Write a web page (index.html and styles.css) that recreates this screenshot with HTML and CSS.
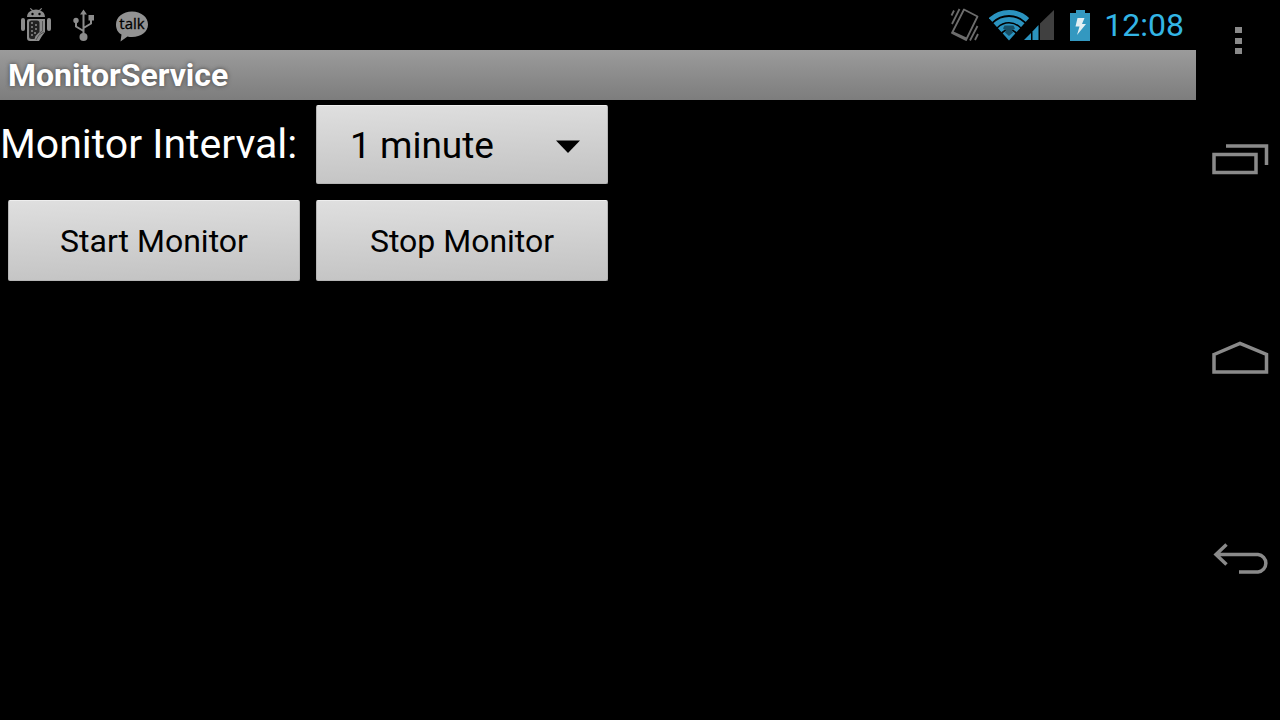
FILE: index.html
```html
<!DOCTYPE html>
<html lang="en">
<head>
<meta charset="utf-8">
<title>MonitorService</title>
<link rel="stylesheet" href="styles.css">
</head>
<body>
<div class="screen">
  <header class="status-bar">
    <div class="notifications">
      <svg class="icon" width="30" height="34" viewBox="0 0 30 34" aria-label="USB debugging">
        <g fill="#8c8c8c">
          <path d="M6 9C6 5.500 8 3.500 10.800 2.500L8.800 .7l.9-.7 2.200 2q3.100-.8 6.200 0L20.300 0l.9.7-2 1.800C22 3.500 24 5.500 24 9z"/>
          <rect x="0" y="10" width="4" height="13" rx="2"/>
          <rect x="26" y="10" width="4" height="13" rx="2"/>
          <path d="M6 13q0-2 2-2h16v13l-3 4-3 5H9q-3 0-3-3z"/>
        </g>
        <path d="M8 15q0-2.500 2.500-2.500H16q2.500 0 2.500 2.500V24l-4 4-1 3H10.500Q8 31 8 29z" fill="#222"/>
        <path d="M21.500 13v10l-3 2M23 24l-5 3-3 5" fill="none" stroke="#555" stroke-width="1"/>
        <g fill="#8c8c8c"><circle cx="11" cy="15" r="1"/><circle cx="15" cy="17" r="1"/><circle cx="11" cy="19" r="1"/><circle cx="15" cy="21" r="1"/><circle cx="11" cy="23" r="1"/><circle cx="14" cy="25" r="1"/><circle cx="11" cy="27" r="1"/></g>
        <circle cx="11.500" cy="6" r="1.200" fill="#000"/><circle cx="18.500" cy="6" r="1.200" fill="#000"/>
      </svg>
      <svg class="icon" width="22" height="34" viewBox="0 0 22 34" aria-label="USB connected">
        <path d="M10.500 29V6M10.500 23L3 18.500V13M10.500 20l7.500-4.500V11" fill="none" stroke="#8c8c8c" stroke-width="2"/>
        <path d="M10.500 1.500L14 6.500H7zM15.500 7H21v5.500h-5.500z" fill="#8c8c8c"/>
        <circle cx="3" cy="12.500" r="2.700" fill="#8c8c8c"/><circle cx="10.500" cy="29" r="4" fill="#8c8c8c"/>
      </svg>
      <svg class="icon" width="32" height="34" viewBox="0 0 32 34" aria-label="Talk message">
        <path d="M16 3.500C7 3.500 0 9 0 16.500 0 21 2 25 5.500 26.500l-1 7 7-5q2 .5 4.500.5c9 0 16-5 16-12.500S25 3.500 16 3.500z" fill="#929292"/>
        <text x="16" y="21" text-anchor="middle" class="talk-text">talk</text>
      </svg>
    </div>
    <div class="indicators">
      <svg class="vibrate" width="30" height="34" viewBox="0 0 30 34" aria-label="Vibrate">
        <g fill="none" stroke="#6c6c6c" stroke-width="1.800">
          <path d="M14 1.500L27.500 8.500 16 32 2 25z" stroke-linejoin="round"/>
          <path d="M1.500 7.500l2.500-5M2 16L9.500 1M20 32.500L27.500 18M25 32l3-6"/>
        </g>
        <path d="M2.500 23L16.500 29.500v3L1.500 25z" fill="#6c6c6c"/>
      </svg>
      <svg class="signals" width="66" height="34" viewBox="0 0 66 34" aria-label="Wi-Fi and mobile signal">
        <defs><clipPath id="fan"><path d="M20 32.500L-2 8V-2h44V8z"/></clipPath></defs>
        <g clip-path="url(#fan)">
          <g fill="none" stroke="#2b93bf" stroke-width="5.200">
            <circle cx="20" cy="31" r="26.500"/><circle cx="20" cy="31" r="19.500"/>
            <circle cx="20" cy="31" r="12.800"/>
          </g>
          <circle cx="20" cy="31" r="8.500" fill="#2b93bf"/>
        </g>
        <path d="M15.500 17.500h9l1.500 3-3 2 1 2-4 3.500-4-3.500 1-2-3-2z" fill="#174f66"/>
        <path d="M35 32l7-7v7z" fill="#2b93bf"/>
        <path d="M43.500 23.500L49.500 17v15h-6z" fill="#2b93bf"/>
        <path d="M51 15.500L65 2v30H51z" fill="#404040"/>
      </svg>
      <svg class="battery" width="20" height="31" viewBox="0 0 20 31" aria-label="Charging">
        <path d="M6 0h9v3h5v28H0V3h6z" fill="#3398c0"/>
        <path d="M7.500 8h7L12 14h4L7 25l2.500-8.500H5.500z" fill="#e3eff3"/>
      </svg>
      <time class="clock">12:08</time>
    </div>
  </header>
  <h1 class="title-bar">MonitorService</h1>
  <main class="content">
    <form class="controls">
      <label class="interval-label" for="interval">Monitor Interval:</label>
      <div class="spinner">
        <select id="interval" class="interval-select"><option>1 minute</option></select>
        <svg class="arrow" width="24" height="13" viewBox="0 0 24 13" aria-hidden="true"><path d="M0 .5h24L12 13z"/></svg>
      </div>
      <button class="action" type="button">Start Monitor</button>
      <button class="action" type="button">Stop Monitor</button>
    </form>
  </main>
</div>
<nav class="nav-bar">
  <button class="nav-button menu" type="button" aria-label="Menu">
    <svg width="7" height="28" viewBox="0 0 7 28"><path d="M0 0h7v6H0zM0 11h7v6H0zM0 21h7v6H0z" fill="#8a8a8a"/></svg>
  </button>
  <button class="nav-button" type="button" aria-label="Recent apps">
    <svg width="58" height="34" viewBox="0 0 58 34"><path d="M3 11.500h42v18H3zM15 3h40.500v19" fill="none" stroke="#8a8a8a" stroke-width="3.500"/></svg>
  </button>
  <button class="nav-button" type="button" aria-label="Home">
    <svg width="58" height="38" viewBox="0 0 58 38"><path d="M3 13.500L29 2.500l26.500 11V31H3z" fill="none" stroke="#8a8a8a" stroke-width="3.500"/></svg>
  </button>
  <button class="nav-button" type="button" aria-label="Back">
    <svg width="58" height="34" viewBox="0 0 58 34"><path d="M5 11.500h42a8.800 8.800 0 0 1 0 17.500H28M15.500 1.500L5 11.500l10.500 10" fill="none" stroke="#8a8a8a" stroke-width="3.500"/></svg>
  </button>
</nav>
</body>
</html>
```
FILE: styles.css
```css
* { box-sizing: border-box; }

body {
  margin: 0;
  min-height: 100vh;
  display: flex;
  background: #000;
  color: #fff;
  font-family: Roboto, sans-serif;
}

svg { display: block; flex: none; }

.screen { flex: 1; min-width: 0; }

.status-bar {
  height: 50px;
  display: flex;
  justify-content: space-between;
  align-items: center;
  padding: 0 12px 0 21px;
}

.notifications { display: flex; gap: 22px; align-items: center; }
.notifications .icon:nth-child(3) { margin-left: -1px; }

.talk-text { font: 400 15px "Open Sans", sans-serif; fill: #000; stroke: #000; stroke-width: .3px; }

.indicators { display: flex; align-items: center; }
.signals { margin-left: 9px; }
.battery { margin-left: 15px; }

.clock {
  margin-left: 14px;
  color: #33b5e5;
  font-size: 32px;
  line-height: 50px;
}

.title-bar {
  margin: 0;
  padding: 0 8px;
  background: linear-gradient(#9b9b9b, #7d7d7d);
  font-size: 32px;
  font-weight: 700;
  line-height: 50px;
  text-shadow: 0 0 4px #444;
}

.controls {
  display: grid;
  grid-template-columns: 292px 292px;
  column-gap: 16px;
  row-gap: 16px;
  padding: 5px 8px;
}

.interval-label {
  margin-left: -8px;
  font-size: 41px;
  line-height: 79px;
  white-space: nowrap;
}

.spinner { position: relative; display: flex; }

.arrow {
  position: absolute;
  right: 28px;
  top: 35px;
  pointer-events: none;
}

.interval-select,
.action {
  width: 100%;
  border: 1px solid #b5b5b5;
  border-top-color: #eee;
  border-radius: 2px;
  background: linear-gradient(178deg, #dfdfdf, #c2c2c2);
  color: #000;
  font-family: inherit;
}

.interval-select {
  height: 79px;
  padding: 2px 60px 0 33px;
  appearance: none;
  font-size: 37px;
}

.action {
  height: 81px;
  padding: 0;
  font-size: 32px;
}

.nav-bar {
  width: 84px;
  display: flex;
  flex-direction: column;
  padding-bottom: 60px;
}

.nav-button {
  flex: 1;
  display: flex;
  justify-content: center;
  align-items: center;
  padding: 0 0 0 4px;
  border: 0;
  background: none;
}

.nav-button.menu {
  flex: none;
  height: 60px;
  align-items: flex-end;
  padding: 0 0 5px 1px;
}
```
